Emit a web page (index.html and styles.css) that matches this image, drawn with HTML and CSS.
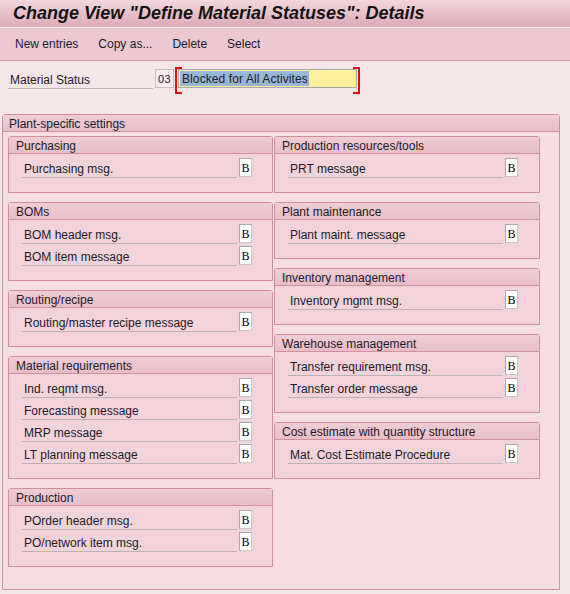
FILE: index.html
```html
<!DOCTYPE html>
<html>
<head>
<meta charset="utf-8">
<title>Change View</title>
<link rel="stylesheet" href="styles.css">
</head>
<body>
<div class="titlebar"><h1 class="title">Change View "Define Material Statuses": Details</h1></div>
<div class="toolbar">
  <span class="tb-item">New entries</span>
  <span class="tb-item">Copy as...</span>
  <span class="tb-item">Delete</span>
  <span class="tb-item">Select</span>
</div>
<div class="status-row">
  <div class="status-label">Material Status</div>
  <div class="key-box">03</div>
  <div class="focus-wrap">
    <div class="input-field"><span class="sel">Blocked for All Activites</span></div>
  </div>
</div>

<div class="group main">
  <div class="group-head">Plant-specific settings</div>
  <div class="columns">
    <div class="col">
      <div class="group sub">
        <div class="group-head">Purchasing</div>
        <div class="rows">
          <div class="row"><div class="lbl">Purchasing msg.</div><div class="val">B</div></div>
        </div>
      </div>
      <div class="group sub">
        <div class="group-head">BOMs</div>
        <div class="rows">
          <div class="row"><div class="lbl">BOM header msg.</div><div class="val">B</div></div>
          <div class="row"><div class="lbl">BOM item message</div><div class="val">B</div></div>
        </div>
      </div>
      <div class="group sub">
        <div class="group-head">Routing/recipe</div>
        <div class="rows">
          <div class="row"><div class="lbl">Routing/master recipe message</div><div class="val">B</div></div>
        </div>
      </div>
      <div class="group sub">
        <div class="group-head">Material requirements</div>
        <div class="rows">
          <div class="row"><div class="lbl">Ind. reqmt msg.</div><div class="val">B</div></div>
          <div class="row"><div class="lbl">Forecasting message</div><div class="val">B</div></div>
          <div class="row"><div class="lbl">MRP message</div><div class="val">B</div></div>
          <div class="row"><div class="lbl">LT planning message</div><div class="val">B</div></div>
        </div>
      </div>
      <div class="group sub">
        <div class="group-head">Production</div>
        <div class="rows">
          <div class="row"><div class="lbl">POrder header msg.</div><div class="val">B</div></div>
          <div class="row"><div class="lbl">PO/network item msg.</div><div class="val">B</div></div>
        </div>
      </div>
    </div>
    <div class="col">
      <div class="group sub">
        <div class="group-head">Production resources/tools</div>
        <div class="rows">
          <div class="row"><div class="lbl">PRT message</div><div class="val">B</div></div>
        </div>
      </div>
      <div class="group sub">
        <div class="group-head">Plant maintenance</div>
        <div class="rows">
          <div class="row"><div class="lbl">Plant maint. message</div><div class="val">B</div></div>
        </div>
      </div>
      <div class="group sub">
        <div class="group-head">Inventory management</div>
        <div class="rows">
          <div class="row"><div class="lbl">Inventory mgmt msg.</div><div class="val">B</div></div>
        </div>
      </div>
      <div class="group sub">
        <div class="group-head">Warehouse management</div>
        <div class="rows">
          <div class="row"><div class="lbl">Transfer requirement msg.</div><div class="val">B</div></div>
          <div class="row"><div class="lbl">Transfer order message</div><div class="val">B</div></div>
        </div>
      </div>
      <div class="group sub">
        <div class="group-head">Cost estimate with quantity structure</div>
        <div class="rows">
          <div class="row"><div class="lbl">Mat. Cost Estimate Procedure</div><div class="val">B</div></div>
        </div>
      </div>
    </div>
  </div>
</div>
</body>
</html>
```

FILE: styles.css
```css
* { box-sizing: border-box; }
html, body { margin: 0; padding: 0; }
body {
  background: #f6e5e9;
  font-family: "Liberation Sans", Arial, sans-serif;
  font-size: 12px;
  color: #1a1a2a;
  width: 570px;
  height: 594px;
  overflow: hidden;
}
.titlebar {
  height: 28px;
  background: linear-gradient(#f2d7dd, #dcaab6);
  border-bottom: 1px solid #f8eef0;
  display: flex;
  align-items: center;
  padding-left: 13px;
}
.title {
  margin: 0;
  font-size: 18px;
  font-weight: bold;
  font-style: italic;
  color: #141414;
  white-space: nowrap;
}
.toolbar {
  height: 33px;
  background: #ecc9d1;
  border-bottom: 1px solid #cf9aa6;
  display: flex;
  align-items: center;
  padding-left: 15px;
  gap: 20px;
}
.status-row {
  display: flex;
  align-items: flex-start;
  padding: 6px 0 0 8px;
  height: 53px;
}
.status-label {
  width: 145px;
  height: 21px;
  margin-top: 1px;
  padding: 5px 0 0 2px;
  border-bottom: 1px solid #c4b4b8;
}
.key-box {
  width: 19px;
  height: 19px;
  margin: 2px 0 0 2px;
  border: 1px solid #cdbdc1;
  background: #f7e9ec;
  font-size: 11px;
  padding: 3px 0 0 2px;
  letter-spacing: 0.5px;
}
.focus-wrap {
  position: relative;
  width: 185px;
  height: 23px;
  margin-left: 1px;
  padding: 2px 3px;
}
.focus-wrap::before, .focus-wrap::after {
  content: "";
  position: absolute;
  top: 0;
  width: 5px;
  height: 23px;
  border: 2px solid #e01010;
}
.focus-wrap::before { left: 0; border-right: none; }
.focus-wrap::after { right: 0; border-left: none; }
.input-field {
  height: 19px;
  background: #fcef9e;
  border: 1px solid #a9a9a9;
  padding: 1px 0 0 1px;
}
.sel {
  display: inline-block;
  background: #99b6d6;
  height: 15px;
  padding: 0 1px 0 2px;
  line-height: 16px;
  letter-spacing: 0.1px;
}
.group {
  border: 1px solid #cf8f9d;
  border-radius: 3px 3px 0 0;
}
.group-head {
  height: 17px;
  border-bottom: 1px solid #cf8f9d;
  background: linear-gradient(#eecdd4, #e8bec7);
  padding-top: 2px;
  line-height: 14px;
  white-space: nowrap;
}
.main {
  margin-left: 2px;
  width: 558px;
  height: 476px;
  background: #f4dee2;
}
.main > .group-head { padding-left: 6px; }
.columns {
  display: grid;
  grid-template-columns: 265px 266px;
  column-gap: 1px;
  padding: 4px 0 0 5px;
  align-items: start;
}
.col {
  display: flex;
  flex-direction: column;
  gap: 9px;
}
.sub {
  background: #f2d3d9;
}
.sub > .group-head { padding-left: 7px; }
.rows {
  padding: 4px 0 12px 13px;
}
.row {
  display: flex;
  height: 20px;
  margin-bottom: 2px;
}
.lbl {
  width: 215px;
  height: 20px;
  padding: 4px 0 0 2px;
  border-bottom: 1px solid #bfb2b5;
  white-space: nowrap;
}
.val {
  width: 13px;
  height: 19px;
  margin-left: 2px;
  background: #ffffff;
  border: 1px solid #aaaaaa;
  border-right-color: #c8c8c8;
  border-bottom-color: #c8c8c8;
  font-family: "Liberation Serif", "Times New Roman", serif;
  font-size: 12px;
  line-height: 18px;
  text-align: center;
  color: #000;
}
```
